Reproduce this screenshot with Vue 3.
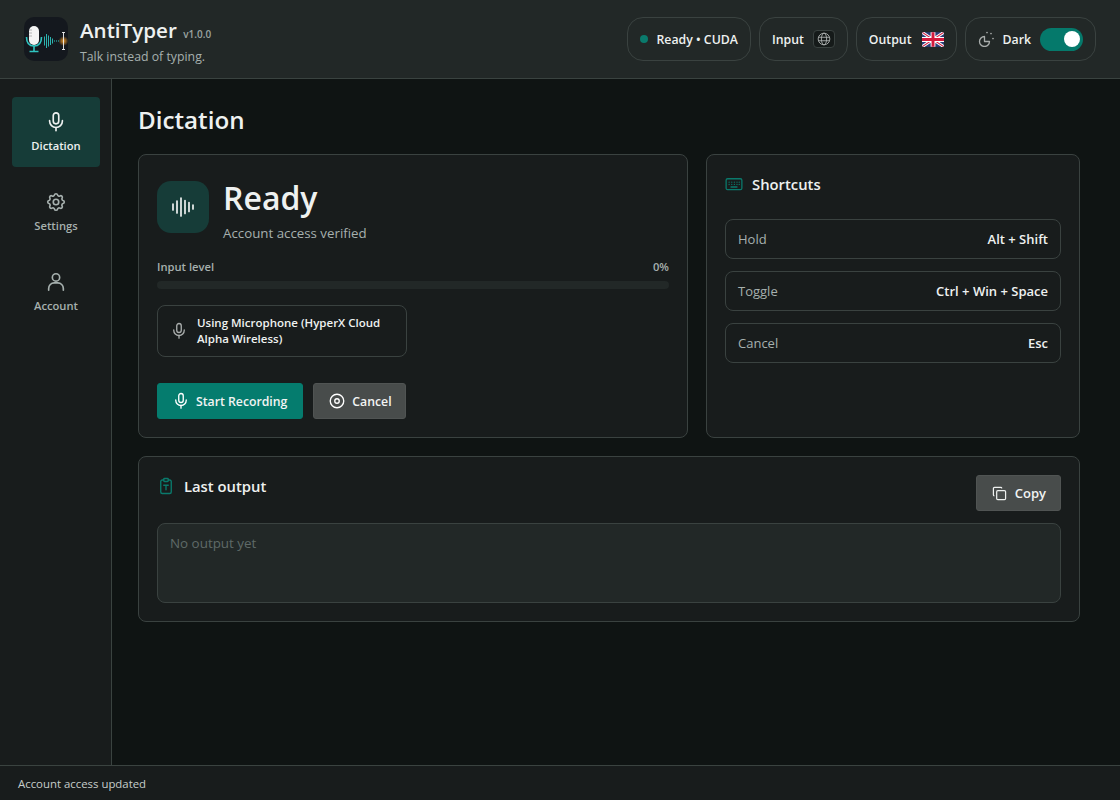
<template>
  <div class="app">
    <header class="header">
      <div class="brand">
        <div class="logo">
          <svg width="44" height="44" viewBox="0 0 44 44" fill="none">
            <defs>
              <radialGradient id="glow">
                <stop offset="0" stop-color="#f59a23" stop-opacity="0.95" />
                <stop offset="1" stop-color="#f59a23" stop-opacity="0" />
              </radialGradient>
            </defs>
            <rect x="5" y="9" width="10" height="19" rx="5" fill="#f4f4f4" />
            <path d="M5 13h3M5 16h3M5 19h3" stroke="#9a9a9a" stroke-width="0.7" />
            <path d="M2.500 20c0 6 3 9 7.500 9s7.500-3 7.500-9" stroke="#2fc4c0" stroke-width="1.600" />
            <path d="M10 29v5M5.500 34.500h9" stroke="#2fc4c0" stroke-width="1.600" />
            <path d="M20.500 19.500v9M22.500 17v14M24.500 18.500v11M26.500 20v8M28.500 21.500v5" stroke="#2fc4c0" stroke-width="0.900" />
            <path d="M30 24h6" stroke="#2fc4c0" stroke-width="1" stroke-dasharray="1 1" />
            <circle cx="39.500" cy="24" r="5" fill="url(#glow)" />
            <path d="M39.500 15.500v17M38 15.500h3M38 32.500h3" stroke="#f2f2f2" stroke-width="0.900" />
          </svg>
        </div>
        <div class="brand-text">
          <div class="brand-name">AntiTyper <span class="version">v1.0.0</span></div>
          <div class="tagline">Talk instead of typing.</div>
        </div>
      </div>
      <div class="pills">
        <div class="pill">
          <span class="dot"></span>
          <span>Ready • CUDA</span>
        </div>
        <div class="pill">
          <span>Input</span>
          <span class="globe-box">
            <svg width="14" height="14" viewBox="0 0 24 24" fill="none" stroke="#a9adac" stroke-width="1.600">
              <circle cx="12" cy="12" r="10" />
              <ellipse cx="12" cy="12" rx="4.500" ry="10" />
              <path d="M2.500 9h19M2.500 15h19" />
            </svg>
          </span>
        </div>
        <div class="pill output-pill">
          <span>Output</span>
          <svg class="flag" width="22" height="15" viewBox="0 0 60 40">
            <rect width="60" height="40" fill="#2a3f7a" />
            <path d="M0 0l60 40M60 0L0 40" stroke="#fff" stroke-width="8" />
            <path d="M0 0l60 40M60 0L0 40" stroke="#d3193c" stroke-width="3" />
            <path d="M30 0v40M0 20h60" stroke="#fff" stroke-width="13" />
            <path d="M30 0v40M0 20h60" stroke="#d3193c" stroke-width="8" />
          </svg>
        </div>
        <div class="pill theme-pill">
          <svg width="16" height="16" viewBox="0 0 16 16" fill="none" stroke="#a9adac" stroke-width="1.300" stroke-linecap="round" stroke-linejoin="round">
            <path d="M6.500 5.500a5 5 0 1 0 5 5H6.500z" />
            <path d="M9 1.500h.01M13 2.500h.01M15 7.500h.01" stroke-width="1.700" />
          </svg>
          <span>Dark</span>
          <span class="toggle"><span class="knob"></span></span>
        </div>
      </div>
    </header>

    <div class="body">
      <nav class="sidebar">
        <div v-for="item in navItems" :key="item.label" class="nav-item" :class="{ active: item.label === 'Dictation' }">
          <svg width="22" height="22" viewBox="0 0 24 24" fill="none" stroke="currentColor" stroke-width="1.800" stroke-linecap="round" stroke-linejoin="round">
            <path v-for="d in item.paths" :key="d" :d="d" />
          </svg>
          <span>{{ item.label }}</span>
        </div>
      </nav>

      <main class="main">
        <h1 class="title">Dictation</h1>
        <div class="top-grid">
          <section class="card status-card">
            <div class="status-head">
              <div class="status-icon">
                <svg width="24" height="24" viewBox="0 0 24 24" fill="none" stroke="#eef1f0" stroke-width="1.700" stroke-linecap="round">
                  <path d="M2 9v6M6 6v12M10 3v18M14 5.500v13M18 7.500v9M22 10v4" />
                </svg>
              </div>
              <div>
                <div class="status-title">Ready</div>
                <div class="status-sub">Account access verified</div>
              </div>
            </div>
            <div class="level-row">
              <span>Input level</span>
              <span>0%</span>
            </div>
            <div class="level-bar"></div>
            <div class="device">
              <svg width="18" height="18" viewBox="0 0 24 24" fill="none" stroke="#a9adac" stroke-width="1.800" stroke-linecap="round" stroke-linejoin="round">
                <path v-for="d in micPaths" :key="d" :d="d" />
              </svg>
              <span>Using Microphone (HyperX Cloud Alpha Wireless)</span>
            </div>
            <div class="actions">
              <button class="btn primary">
                <svg width="18" height="18" viewBox="0 0 24 24" fill="none" stroke="#fff" stroke-width="1.800" stroke-linecap="round" stroke-linejoin="round">
                  <path v-for="d in micPaths" :key="d" :d="d" />
                </svg>
                Start Recording
              </button>
              <button class="btn cancel">
                <svg width="18" height="18" viewBox="0 0 24 24" fill="none" stroke="#fff" stroke-width="1.800">
                  <circle cx="12" cy="12" r="9" />
                  <circle cx="12" cy="12" r="3" />
                </svg>
                Cancel
              </button>
            </div>
          </section>

          <section class="card shortcuts-card">
            <div class="card-title shortcuts-title">
              <svg width="18" height="18" viewBox="0 0 24 24" fill="none" stroke="#0a7a6c" stroke-width="1.700" stroke-linecap="round">
                <rect x="1.500" y="5" width="21" height="14.500" rx="2" />
                <path d="M5.500 9.500h.01M9 9.500h.01M12.500 9.500h.01M16 9.500h.01M19 9.500h.01M5.500 12.500h.01M9 12.500h.01M12.500 12.500h.01M16 12.500h.01M19 12.500h.01M8 16h8" />
              </svg>
              Shortcuts
            </div>
            <div class="shortcut-list">
              <div v-for="s in shortcuts" :key="s.name" class="shortcut">
                <span class="shortcut-name">{{ s.name }}</span>
                <span class="shortcut-keys">{{ s.keys }}</span>
              </div>
            </div>
          </section>
        </div>

        <section class="card output-card">
          <div class="output-head">
            <div class="card-title">
              <svg width="18" height="18" viewBox="0 0 24 24" fill="none" stroke="#0a7a6c" stroke-width="1.800" stroke-linecap="round" stroke-linejoin="round">
                <path d="M9 4H7a2 2 0 0 0-2 2v14a2 2 0 0 0 2 2h10a2 2 0 0 0 2-2V6a2 2 0 0 0-2-2h-2" />
                <rect x="9" y="2" width="6" height="4" rx="1" />
                <path d="M9 11h6M12 11v6" />
              </svg>
              Last output
            </div>
            <button class="btn copy">
              <svg width="15" height="15" viewBox="0 0 16 16" fill="none" stroke="#eef1f0" stroke-width="1.300">
                <rect x="5" y="5" width="9.500" height="9.500" rx="1.200" />
                <path d="M2.500 10.500A1.200 1.200 0 0 1 1.500 9.300V2.700a1.200 1.200 0 0 1 1.200-1.200h6.600a1.200 1.200 0 0 1 1.200 1" />
              </svg>
              Copy
            </button>
          </div>
          <div class="output-box">No output yet</div>
        </section>
      </main>
    </div>

    <footer class="footer">Account access updated</footer>
  </div>
</template>

<script setup>
const micPaths = [
  'M9 5a3 3 0 0 1 6 0v6a3 3 0 0 1-6 0z',
  'M5 10.500v.5a7 7 0 0 0 14 0v-.5',
  'M12 18v3.500'
]

const navItems = [
  { label: 'Dictation', paths: micPaths },
  {
    label: 'Settings',
    paths: [
      'M10.300 4.300c.4-1.800 3-1.800 3.400 0a1.700 1.700 0 0 0 2.600 1.100c1.500-.9 3.300.8 2.400 2.400a1.700 1.700 0 0 0 1 2.500c1.800.4 1.800 3 0 3.400a1.700 1.700 0 0 0-1 2.600c.9 1.500-.9 3.300-2.400 2.400a1.700 1.700 0 0 0-2.600 1c-.4 1.800-3 1.800-3.400 0a1.700 1.700 0 0 0-2.600-1c-1.500.9-3.300-.9-2.400-2.400a1.700 1.700 0 0 0-1-2.600c-1.800-.4-1.800-3 0-3.400a1.700 1.700 0 0 0 1-2.500c-.9-1.600.9-3.300 2.400-2.400a1.700 1.700 0 0 0 2.600-1.100z',
      'M9 12a3 3 0 1 0 6 0a3 3 0 1 0-6 0'
    ]
  },
  {
    label: 'Account',
    paths: [
      'M8 7a4 4 0 1 0 8 0a4 4 0 1 0-8 0',
      'M4 21v-2a6 6 0 0 1 6-6h4a6 6 0 0 1 6 6v2'
    ]
  }
]

const shortcuts = [
  { name: 'Hold', keys: 'Alt + Shift' },
  { name: 'Toggle', keys: 'Ctrl + Win + Space' },
  { name: 'Cancel', keys: 'Esc' }
]
</script>

<style>
html, body {
  margin: 0;
  background: #0f1413;
}
</style>

<style scoped>
.app {
  width: 1120px;
  height: 800px;
  display: flex;
  flex-direction: column;
  background: #0f1413;
  color: #eef1f0;
  font-family: "Open Sans", "Noto Sans", sans-serif;
  overflow: hidden;
}

.header {
  height: 78px;
  flex: none;
  box-sizing: content-box;
  display: flex;
  align-items: center;
  justify-content: space-between;
  padding: 0 24px;
  background: #222827;
  border-bottom: 1px solid #3a4340;
}

.brand {
  display: flex;
  align-items: center;
  gap: 12px;
}

.logo {
  width: 44px;
  height: 44px;
  border-radius: 10px;
  background: #14181e;
  overflow: hidden;
}

.logo svg {
  display: block;
}

.brand-text {
  padding-top: 4px;
}

.brand-name {
  font-size: 20.6px;
  font-weight: 600;
  line-height: 26px;
}

.version {
  margin-left: 1px;
  font-size: 10px;
  font-weight: 600;
  color: #9aa3a1;
}

.tagline {
  margin-top: 1px;
  font-size: 12.3px;
  line-height: 18px;
  color: #a6b0ae;
}

.pills {
  display: flex;
  gap: 8px;
}

.pill {
  height: 42px;
  display: flex;
  align-items: center;
  gap: 9px;
  padding: 0 12px;
  border: 1px solid #3a4240;
  border-radius: 16px;
  font-size: 12.300px;
  font-weight: 600;
}

.output-pill {
  gap: 10px;
}

.dot {
  width: 8px;
  height: 8px;
  border-radius: 50%;
  background: #0a7a6c;
}

.globe-box {
  width: 22px;
  height: 18px;
  box-sizing: border-box;
  display: flex;
  align-items: center;
  justify-content: center;
  background: #151a19;
  border: 1px solid #3a4240;
  border-radius: 4px;
}

.flag {
  border-radius: 2px;
}

.toggle {
  width: 43px;
  height: 23px;
  padding: 0 3px;
  box-sizing: border-box;
  display: flex;
  align-items: center;
  justify-content: flex-end;
  border-radius: 12px;
  background: #05796b;
}

.knob {
  width: 16px;
  height: 16px;
  border-radius: 50%;
  background: #fff;
}

.body {
  flex: 1;
  min-height: 0;
  display: flex;
}

.sidebar {
  width: 112px;
  flex: none;
  display: flex;
  flex-direction: column;
  gap: 10px;
  padding: 18px 11px 18px 12px;
  box-sizing: border-box;
  background: #181c1c;
  border-right: 1px solid #3a4340;
}

.nav-item {
  height: 70px;
  box-sizing: border-box;
  padding-bottom: 1px;
  display: flex;
  flex-direction: column;
  align-items: center;
  justify-content: center;
  gap: 5px;
  border-radius: 4px;
  color: #a6b0ae;
  font-size: 11.200px;
  font-weight: 600;
}

.nav-item.active {
  background: #163c38;
  color: #eef1f0;
}

.main {
  flex: 1;
  min-width: 0;
  padding: 22px 40px 0 26px;
}

.title {
  margin: 0 0 15px;
  font-size: 24.200px;
  font-weight: 600;
  line-height: 38px;
}

.top-grid {
  display: grid;
  grid-template-columns: 550px 374px;
  gap: 18px;
}

.card {
  box-sizing: border-box;
  background: #181c1c;
  border: 1px solid #3a4240;
  border-radius: 8px;
  padding: 18px;
}

.status-card {
  height: 284px;
}

.status-head {
  display: flex;
  align-items: flex-start;
  gap: 14px;
  margin-top: 8px;
}

.status-icon {
  width: 52px;
  height: 52px;
  display: flex;
  align-items: center;
  justify-content: center;
  border-radius: 14px;
  background: #163c38;
}

.status-title {
  font-size: 32px;
  font-weight: 600;
  line-height: 34px;
}

.status-sub {
  margin-top: 9px;
  font-size: 13.300px;
  line-height: 18px;
  color: #a6b0ae;
}

.level-row {
  display: flex;
  justify-content: space-between;
  margin-top: 17px;
  font-size: 11.200px;
  font-weight: 600;
  line-height: 16px;
  color: #a6b0ae;
}

.level-bar {
  height: 8px;
  margin-top: 6px;
  border-radius: 4px;
  background: #222827;
}

.device {
  width: 250px;
  box-sizing: border-box;
  display: flex;
  align-items: center;
  gap: 9px;
  margin-top: 16px;
  padding: 9px 12px;
  border: 1px solid #3a4240;
  border-radius: 8px;
  font-size: 11.500px;
  font-weight: 600;
  line-height: 16px;
}

.device svg {
  flex: none;
}

.actions {
  display: flex;
  gap: 10px;
  margin-top: 26px;
}

.btn {
  height: 36px;
  display: flex;
  align-items: center;
  gap: 6px;
  padding: 0 15px 0 14px;
  border: 1px solid #505453;
  border-radius: 3px;
  background: #484c4b;
  color: #f2f4f3;
  font-family: inherit;
  font-size: 12.250px;
  font-weight: 600;
}

.btn.primary {
  border-color: #057c6e;
  background: #057c6e;
}

.btn.cancel {
  padding-right: 13px;
}

.card-title {
  display: flex;
  align-items: center;
  gap: 9px;
  font-size: 14.800px;
  font-weight: 600;
  line-height: 22px;
}

.shortcuts-title {
  margin-bottom: 24px;
}

.shortcut-list {
  display: flex;
  flex-direction: column;
  gap: 12px;
}

.shortcut {
  height: 40px;
  box-sizing: border-box;
  display: flex;
  align-items: center;
  justify-content: space-between;
  padding: 0 12px;
  border: 1px solid #3a4240;
  border-radius: 8px;
  font-size: 13px;
}

.shortcut-name {
  color: #a6b0ae;
}

.shortcut-keys {
  font-weight: 600;
}

.output-card {
  margin-top: 18px;
  height: 166px;
}

.output-head {
  display: flex;
  align-items: flex-start;
  justify-content: space-between;
}

.btn.copy {
  margin-bottom: 12px;
  gap: 8px;
  padding: 0 14px 0 15px;
  font-size: 13px;
}

.output-box {
  height: 80px;
  box-sizing: border-box;
  padding: 10px 12px;
  background: #222827;
  border: 1px solid #3a4240;
  border-radius: 8px;
  font-size: 13.400px;
  color: #5f6a67;
}

.footer {
  height: 34px;
  flex: none;
  display: flex;
  align-items: center;
  padding: 0 18px;
  background: #181c1c;
  border-top: 1px solid #3a4340;
  font-size: 11.400px;
  color: #c6cdcb;
}
</style>
